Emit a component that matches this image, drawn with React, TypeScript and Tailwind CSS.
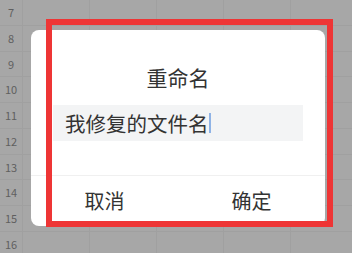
const rows = [7, 8, 9, 10, 11, 12, 13, 14, 15, 16];
const cols = [0, 1, 2, 3, 4];

function Sheet() {
  return (
    <div className="flex flex-col">
      {rows.map((r) => (
        <div key={r} className="flex h-[25.75px] shrink-0 border-b border-[#a0a0a0]">
          <div className="w-[23px] shrink-0 border-r border-[#a0a0a0] flex items-center justify-center text-[11px] text-[#5f5f5f]">
            {r}
          </div>
          {cols.map((c) => (
            <div key={c} className="w-[67px] shrink-0 border-r border-[#a0a0a0]" />
          ))}
        </div>
      ))}
    </div>
  );
}

function RenameDialog() {
  return (
    <div className="absolute left-[31px] top-[30px] w-[294px] h-[196px] bg-white rounded-[8px] flex flex-col text-[#333333]">
      <div className="pt-[33px] h-[61px] text-center text-[21px] leading-[28px]">重命名</div>
      <div className="mt-[14px] mx-[22px] h-[36px] bg-[#f3f4f5] flex items-center pl-[12px] text-[20.5px]">
        <span>我修复的文件名</span>
        <span className="w-[2px] h-[20px] bg-[#8fb3e6]" />
      </div>
      <div className="mt-[34px] border-t border-[#f0f0f0] flex-1 flex">
        <div className="flex-1 flex items-center justify-center text-[20px]">取消</div>
        <div className="flex-1 flex items-center justify-center text-[20px]">确定</div>
      </div>
    </div>
  );
}

export default function App() {
  return (
    <div
      className="relative w-[352px] h-[253px] overflow-hidden bg-[#a7a7a7]"
      style={{ fontFamily: '"Noto Sans CJK SC", "Noto Sans", sans-serif' }}
    >
      <Sheet />
      <RenameDialog />
      <div className="absolute left-[46px] top-[19px] w-[287px] h-[208px] border-[6px] border-[#ee3535]" />
    </div>
  );
}
